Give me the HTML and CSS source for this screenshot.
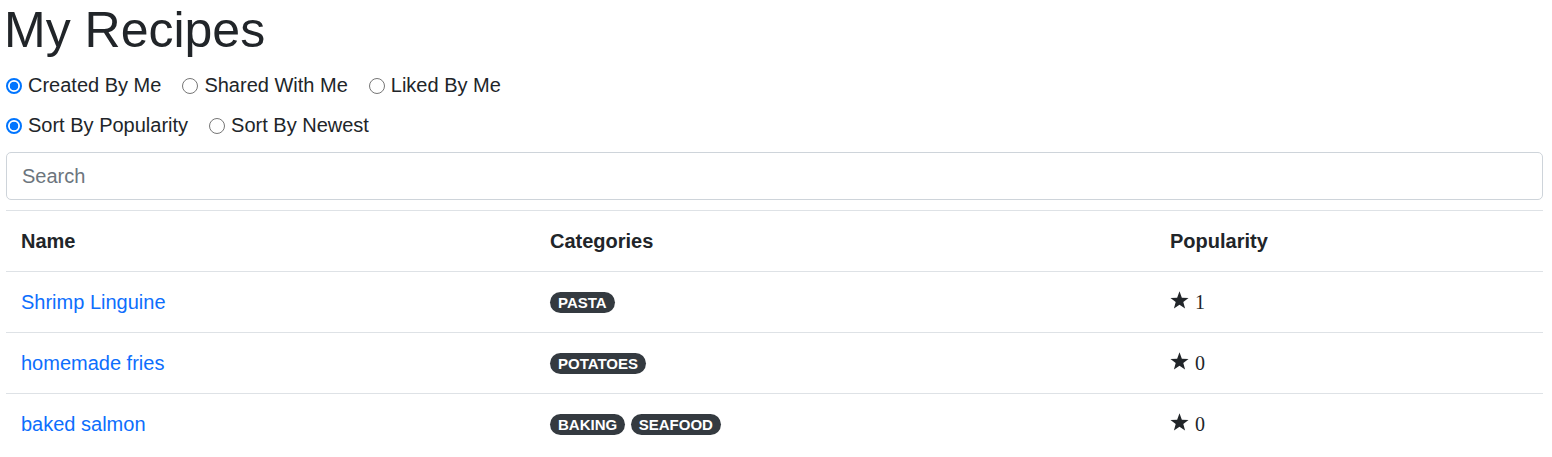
FILE: index.html
```html
<!DOCTYPE html>
<html lang="en">
<head>
<meta charset="utf-8">
<title>My Recipes</title>
<link rel="stylesheet" href="styles.css">
</head>
<body>
<div class="page">
  <h1 class="title">My Recipes</h1>
  <div class="radio-row">
    <label class="opt"><input type="radio" name="owner" checked><span>Created By Me</span></label>
    <label class="opt"><input type="radio" name="owner"><span>Shared With Me</span></label>
    <label class="opt"><input type="radio" name="owner"><span>Liked By Me</span></label>
  </div>
  <div class="radio-row last">
    <label class="opt"><input type="radio" name="sort" checked><span>Sort By Popularity</span></label>
    <label class="opt"><input type="radio" name="sort"><span>Sort By Newest</span></label>
  </div>
  <input class="search" type="text" placeholder="Search">
  <table class="recipes">
    <colgroup>
      <col class="c-name">
      <col class="c-cat">
      <col class="c-pop">
    </colgroup>
    <thead>
      <tr><th>Name</th><th>Categories</th><th>Popularity</th></tr>
    </thead>
    <tbody>
      <tr>
        <td><a href="#">Shrimp Linguine</a></td>
        <td><span class="badge">PASTA</span></td>
        <td class="pop"><svg class="star" viewBox="0 0 20 18.2" width="19" height="18"><polygon points="10,0 12.47,6.6 19.51,6.91 13.99,11.3 15.88,18.09 10,14.2 4.12,18.09 6.01,11.3 0.49,6.91 7.53,6.6"/></svg> 1</td>
      </tr>
      <tr>
        <td><a href="#">homemade fries</a></td>
        <td><span class="badge">POTATOES</span></td>
        <td class="pop"><svg class="star" viewBox="0 0 20 18.2" width="19" height="18"><polygon points="10,0 12.47,6.6 19.51,6.91 13.99,11.3 15.88,18.09 10,14.2 4.12,18.09 6.01,11.3 0.49,6.91 7.53,6.6"/></svg> 0</td>
      </tr>
      <tr>
        <td><a href="#">baked salmon</a></td>
        <td><span class="badge">BAKING</span> <span class="badge">SEAFOOD</span></td>
        <td class="pop"><svg class="star" viewBox="0 0 20 18.2" width="19" height="18"><polygon points="10,0 12.47,6.6 19.51,6.91 13.99,11.3 15.88,18.09 10,14.2 4.12,18.09 6.01,11.3 0.49,6.91 7.53,6.6"/></svg> 0</td>
      </tr>
    </tbody>
  </table>
</div>
</body>
</html>
```

FILE: styles.css
```css
* { box-sizing: border-box; }

html, body {
  margin: 0;
  padding: 0;
  background: #fff;
}

body {
  font-family: "Liberation Sans", Arial, sans-serif;
  font-size: 20px;
  line-height: 30px;
  color: #212529;
}

.page {
  padding: 0 9px 0 6px;
}

.title {
  margin: 0 0 10px -2px;
  font-size: 50px;
  line-height: 60px;
  font-weight: 400;
}

.radio-row {
  display: flex;
  align-items: center;
  height: 30px;
  margin-bottom: 10px;
}

.radio-row.last {
  margin-bottom: 12px;
}

.opt {
  display: flex;
  align-items: center;
  margin-right: 21px;
  cursor: pointer;
}

.opt input {
  appearance: none;
  -webkit-appearance: none;
  width: 16px;
  height: 16px;
  margin: 1px 6px 0 0;
  border: 1px solid #767676;
  border-radius: 50%;
  background: #fff;
  flex: none;
}

.opt input:checked {
  border: 2px solid #0075ff;
  background: radial-gradient(circle, #0075ff 0 4px, #fff 4.6px);
}

.search {
  display: block;
  width: 100%;
  height: 48px;
  margin: 0 0 10px;
  padding: 0 15px;
  border: 1px solid #ced4da;
  border-radius: 5px;
  font-family: inherit;
  font-size: 20px;
  color: #495057;
  background: #fff;
  outline: none;
}

.search::placeholder {
  color: #6c757d;
  opacity: 1;
}

.recipes {
  width: 100%;
  table-layout: fixed;
  border-collapse: collapse;
}

.c-name { width: 529px; }
.c-cat { width: 620px; }

.recipes th,
.recipes td {
  padding: 15px;
  border-top: 1px solid #dee2e6;
  text-align: left;
  vertical-align: top;
  line-height: 30px;
}

.recipes th {
  font-weight: 700;
  border-bottom: 1px solid #dee2e6;
}

.recipes a {
  color: #0d6efd;
  text-decoration: none;
}

.badge {
  display: inline-block;
  padding: 3px 8px;
  font-size: 15px;
  font-weight: 700;
  line-height: 1;
  color: #fff;
  background: #343a40;
  border-radius: 12px;
  white-space: nowrap;
  vertical-align: 1px;
}

.pop {
  font-family: "Liberation Serif", "Times New Roman", serif;
}

.star {
  fill: #212529;
  vertical-align: baseline;
  margin-right: 1px;
}
```
